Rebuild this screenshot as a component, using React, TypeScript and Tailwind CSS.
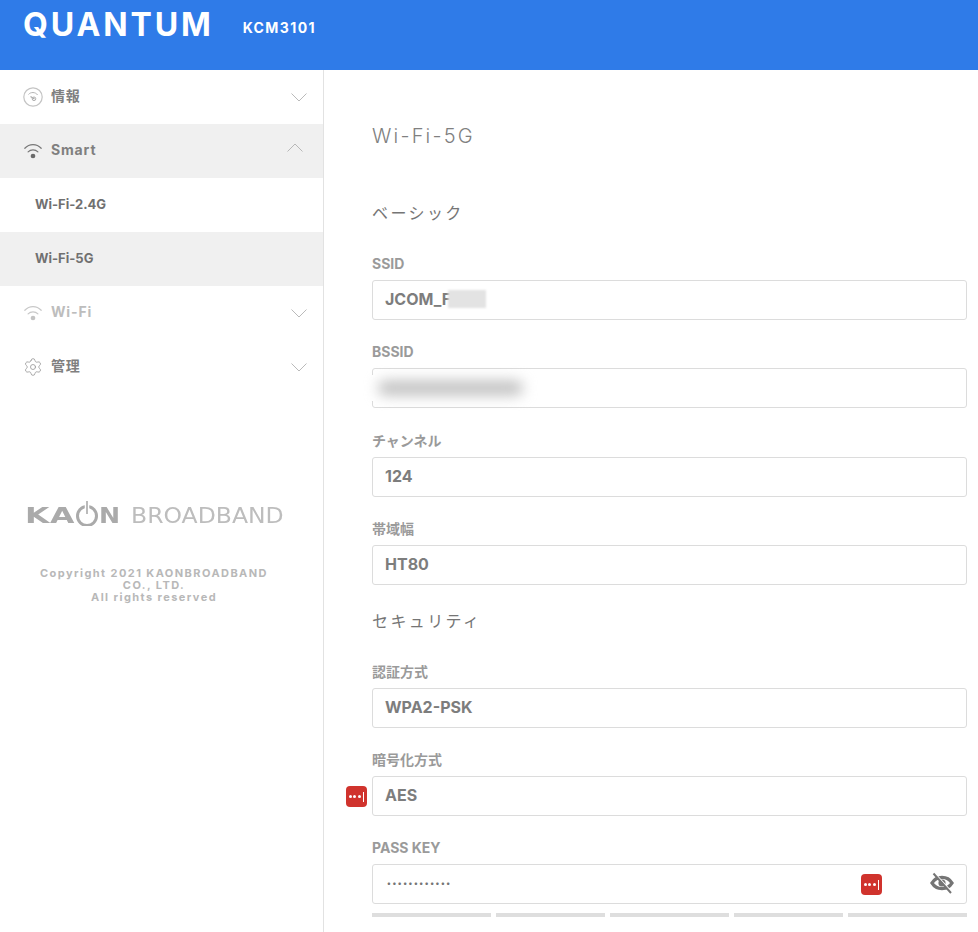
import { Settings } from "lucide-react";

const FONT = "font-['Inter','Noto_Sans_CJK_JP',sans-serif]";

const WifiIcon = ({ light = false }: { light?: boolean }) => (
  <svg width="22" height="20" viewBox="0 0 22 20" fill="none" className={light ? "opacity-40" : ""}>
    <path d="M2 7C7 1.6 15 1.6 20 7" stroke="#777" strokeWidth="1.3" strokeLinecap="round" />
    <path d="M5.6 11C8.6 7.9 13.4 7.9 16.4 11" stroke="#777" strokeWidth="1.3" strokeLinecap="round" />
    <circle cx="11" cy="15.5" r="2.6" fill="#6a6a6a" />
  </svg>
);

const GaugeIcon = () => (
  <svg width="20" height="20" viewBox="0 0 20 20" fill="none">
    <circle cx="10" cy="10" r="9.2" stroke="#c4c4c4" strokeWidth="1.2" />
    <path d="M5.5 7.5C7.5 4.8 12.5 4.8 14.6 8" stroke="#b5b5b5" strokeWidth="1" />
    <path d="M7.5 9.5 L11.5 12" stroke="#a8a8a8" strokeWidth="1.2" />
    <circle cx="11" cy="11.8" r="1.8" stroke="#b0b0b0" strokeWidth="1" />
  </svg>
);

const Chevron = ({ up = false }: { up?: boolean }) => (
  <svg width="16" height="9" viewBox="0 0 16 9" fill="none" className={up ? "mr-[4px] mb-[8px]" : "mt-[1px]"}>
    <path d={up ? "M0.5 8.5L8 1L15.5 8.5" : "M0.5 0.5L8 8L15.5 0.5"} stroke="#a8a8a8" strokeWidth="0.8" />
  </svg>
);

const EyeOffIcon = () => (
  <svg width="24" height="22" viewBox="0 0 24 22" fill="none" className="ml-auto">
    <path d="M2 11C6.5 3.5 17.5 3.5 22 11C17.5 18.5 6.5 18.5 2 11Z" stroke="#757575" strokeWidth="3.4" />
    <circle cx="12" cy="11" r="3.6" fill="#757575" />
    <path d="M5 1.5L21.5 19.5" stroke="#fff" strokeWidth="1.2" />
    <path d="M3.5 1.5L21 21" stroke="#757575" strokeWidth="2" />
  </svg>
);

const PassIcon = ({ className }: { className: string }) => (
  <div className={`absolute flex h-[21px] w-[21px] items-center justify-center gap-[1.5px] rounded-[4px] bg-[#d0332d] ${className}`}>
    <span className="h-[3px] w-[3px] rounded-full bg-white" />
    <span className="h-[3px] w-[3px] rounded-full bg-white" />
    <span className="h-[3px] w-[3px] rounded-full bg-white" />
    <span className="ml-[1px] h-[10px] w-[1px] bg-white" />
  </div>
);

const MenuRow = ({
  icon,
  label,
  open = false,
  active = false,
  light = false,
}: {
  icon: React.ReactNode;
  label: string;
  open?: boolean;
  active?: boolean;
  light?: boolean;
}) => (
  <div className={`flex h-[54px] items-center pr-[16px] pl-[23px] ${active ? "bg-[#f0f0f0]" : ""}`}>
    <div className="flex w-[20px] justify-center">{icon}</div>
    <span className={`mb-[2px] ml-2 text-sm font-bold tracking-[0.06em] ${light ? "text-[#bdbdbd]" : "text-[#7f7f7f]"}`}>{label}</span>
    <div className="ml-auto">
      <Chevron up={open} />
    </div>
  </div>
);

const SubRow = ({ label, active = false }: { label: string; active?: boolean }) => (
  <div className={`flex h-[54px] items-center pb-[1px] pl-[35px] text-[13px] font-bold text-[#707070] ${active ? "bg-[#f0f0f0]" : ""}`}>{label}</div>
);

const Field = ({ label, tight = false, children }: { label: string; tight?: boolean; children: React.ReactNode }) => (
  <div className={tight ? "mb-6" : "mb-[24.33px]"}>
    <div className="mb-2 h-4 text-sm leading-4 font-bold text-[#9a9a9a]">{label}</div>
    <div className="flex h-10 items-center rounded-[3px] border border-[#dcdcdc] px-3 pb-[2px] text-base font-bold text-[#7d7d7d]">{children}</div>
  </div>
);

const Heading = ({ children }: { children: string }) => (
  <div className="mb-[31px] h-6 text-base leading-6 tracking-[0.15em] text-[#757575]">{children}</div>
);

export default function App() {
  return (
    <div className={`h-[932px] overflow-hidden bg-white ${FONT}`}>
      <header className="flex h-[70px] bg-[#2f7be8] pl-[23px] text-white">
        <div className="mt-[6px] text-[32px] leading-[38px] font-bold tracking-[0.09em]">QUANTUM</div>
        <div className="mt-[20px] ml-[29px] text-sm leading-4 font-bold tracking-[0.1em]">KCM3101</div>
      </header>

      <div className="flex h-[862px]">
        <aside className="w-[324px] shrink-0 border-r border-[#e2e2e2]">
          <MenuRow icon={<GaugeIcon />} label="情報" />
          <MenuRow icon={<WifiIcon />} label="Smart" open active />
          <SubRow label="Wi-Fi-2.4G" />
          <SubRow label="Wi-Fi-5G" active />
          <MenuRow icon={<WifiIcon light />} label="Wi-Fi" light />
          <MenuRow icon={<Settings size={22} strokeWidth={1} className="text-[#999]" />} label="管理" />

          <div className="mt-[110px] flex h-6 items-center pl-[25px] font-['DejaVu_Sans',sans-serif] text-[21px] leading-6">
            <span className="w-[50px] origin-left scale-x-[1.5] font-bold tracking-[0.02em] text-[#aaa]">KA</span>
            <svg width="24" height="26" viewBox="0 0 24 26" fill="none" className="mb-[6px]">
              <circle cx="12" cy="16" r="9.5" stroke="#aaa" strokeWidth="3" />
              <path d="M12 1V14" stroke="#fff" strokeWidth="4.5" />
              <path d="M12 1V14" stroke="#aaa" strokeWidth="1.6" />
            </svg>
            <span className="w-[22px] origin-left scale-x-[1.2] font-bold text-[#aaa]">N</span>
            <span className="ml-[10px] origin-left scale-x-[1.12] text-[#bdbdbd]">BROADBAND</span>
          </div>

          <div className="mt-[39px] w-[308px] text-center text-[11px] leading-3 font-bold tracking-[0.13em] text-[#b8b8b8]">
            Copyright 2021 KAONBROADBAND
            <br />
            CO., LTD.
            <br />
            All rights reserved
          </div>
        </aside>

        <main className="relative flex-1 pt-[50px] pr-[11px] pl-[48px]">
          <div className="mb-[49px] h-8 text-xl leading-8 font-light tracking-[0.11em] text-[#808080]">Wi-Fi-5G</div>

          <Heading>ベーシック</Heading>
          <Field label="SSID">
            JCOM_F
            <span className="-ml-[3px] h-[18px] w-[38px] bg-[#e3e3e3] blur-[1px]" />
          </Field>
          <Field label="BSSID">
            <span className="mt-[2px] -ml-[13px] flex h-[26px] w-[175px] items-center bg-white">
              <span className="ml-[6px] h-[14px] w-[145px] rounded-full bg-[#bdbdbd] blur-[7px]" />
            </span>
          </Field>
          <Field label="チャンネル">124</Field>
          <Field label="帯域幅">HT80</Field>

          <Heading>セキュリティ</Heading>
          <Field label="認証方式" tight>WPA2-PSK</Field>
          <Field label="暗号化方式" tight>AES</Field>
          <PassIcon className="top-[716px] left-[22px]" />

          <div className="mb-2 h-4 text-sm leading-4 font-bold text-[#9a9a9a]">PASS KEY</div>
          <div className="flex h-10 items-center rounded-[3px] border border-[#dcdcdc] pr-[12px] pb-[2px] pl-[14px] text-[#757575]">
            <span className="text-[8px] font-bold tracking-[0.2em]">••••••••••••</span>
            <EyeOffIcon />
          </div>
          <PassIcon className="top-[804px] left-[537px]" />
          <div className="mt-[9px] flex gap-[5px]">
            <div className="h-1 w-[119px] bg-[#dedede]" />
            <div className="h-1 w-[109px] bg-[#dedede]" />
            <div className="h-1 w-[119px] bg-[#dedede]" />
            <div className="h-1 w-[109px] bg-[#dedede]" />
            <div className="h-1 w-[119px] bg-[#dedede]" />
          </div>
        </main>
      </div>
    </div>
  );
}
